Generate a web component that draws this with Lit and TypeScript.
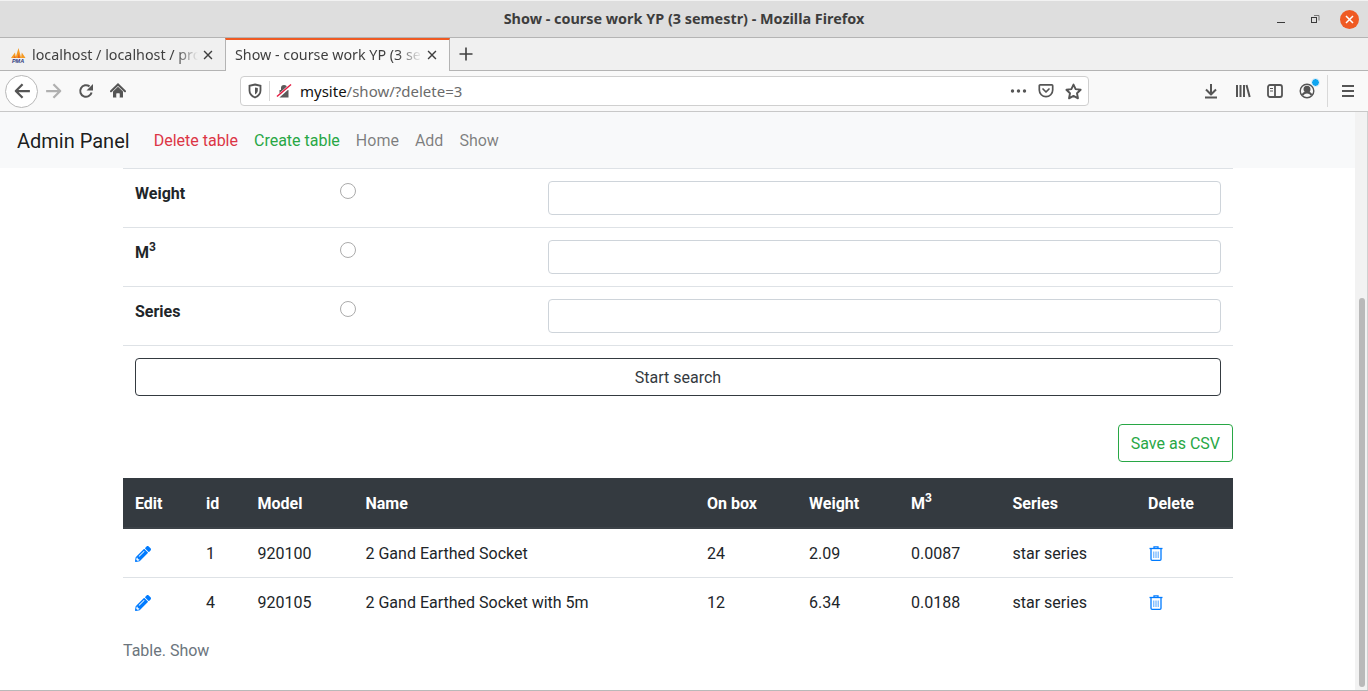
import { LitElement, css, html, svg } from "lit";
import { customElement } from "lit/decorators.js";

const rows = [
  { id: 1, model: "920100", name: "2 Gand Earthed Socket", box: 24, weight: "2.09", m3: "0.0087", series: "star series" },
  { id: 4, model: "920105", name: "2 Gand Earthed Socket with 5m", box: 12, weight: "6.34", m3: "0.0188", series: "star series" },
];

const pencil = svg`<path fill="#007bff" d="M497.9 142.1l-46.1 46.1c-4.7 4.7-12.3 4.7-17 0l-111-111c-4.7-4.7-4.7-12.3 0-17l46.1-46.1c18.7-18.7 49.1-18.7 67.9 0l60.1 60.1c18.8 18.7 18.8 49.1 0 67.9zM284.2 99.8L21.6 362.4.4 483.9c-2.9 16.4 11.4 30.6 27.8 27.8l121.5-21.3 262.6-262.6c4.7-4.7 4.7-12.3 0-17l-111-111c-4.8-4.7-12.4-4.7-17.1 0zM124.1 339.9c-5.5-5.5-5.5-14.3 0-19.8l154-154c5.5-5.5 14.3-5.5 19.8 0s5.5 14.3 0 19.8l-154 154c-5.5 5.500-14.3 5.500-19.8 0zM88 424h48v36.3l-64.5 11.3-31.1-31.1L51.7 376H88v48z"/>`;

const trash = svg`<g fill="none" stroke="#007bff">
  <path d="M.5 2.500h13" stroke-width="1.300"/>
  <path d="M5 2V.9h4V2" stroke-width="1.300"/>
  <path d="M2 3v10.200c0 .7.4 1.100 1.100 1.100h7.800c.7 0 1.100-.4 1.100-1.100V3" stroke-width="1.300"/>
  <path d="M4.800 5.500v6.500M7 5.500v6.500M9.200 5.500v6.500" stroke-width="1" opacity=".7"/>
</g>`;

@customElement("app-root")
export class AppRoot extends LitElement {
  static styles = css`
    :host {
      display: flex;
      flex-direction: column;
      width: 1368px;
      height: 691px;
      overflow: hidden;
      background: #fff;
      font-family: Roboto, "Liberation Sans", sans-serif;
      font-size: 16px;
      line-height: 24px;
      color: #212529;
    }
    svg { display: block; }

    /* firefox window */
    .titlebar {
      flex: none;
      height: 38px;
      box-sizing: border-box;
      border-top: 1px solid #f2f2f2;
      border-bottom: 1px solid #b4b4b4;
      background: #dedede;
      display: flex;
      align-items: center;
      justify-content: center;
      position: relative;
      font: 700 14.4px/20px "Noto Sans", sans-serif;
      color: #3d3d3d;
    }
    .winbtns {
      position: absolute;
      right: 0;
      top: 0;
      height: 36px;
      display: flex;
      align-items: center;
    }
    .winbtn { width: 34px; display: flex; justify-content: center; }
    .winbtn.close { width: 36px; }
    .closeball {
      width: 19px;
      height: 19px;
      border-radius: 50%;
      background: #ef5a23;
      margin-right: 2px;
      display: flex;
      align-items: center;
      justify-content: center;
    }

    .tabs {
      flex: none;
      height: 33px;
      box-sizing: border-box;
      display: flex;
      background: #f0f0f0;
      border-bottom: 1px solid #b4b4b4;
      font: 14.3px/20px "Noto Sans", sans-serif;
      color: #3f3f3f;
    }
    .tab {
      width: 225px;
      box-sizing: border-box;
      display: flex;
      align-items: center;
      position: relative;
    }
    .tab.first { padding: 2px 0 0 10px; }
    .tab.active {
      height: 33px;
      padding: 0 0 2px 9px;
      background: #f9f9f9;
      border-left: 1px solid #b4b4b4;
      border-right: 1px solid #b4b4b4;
      border-top: 2px solid #ef5a23;
    }
    .tabtext {
      flex: 1;
      min-width: 0;
      white-space: nowrap;
      overflow: hidden;
      -webkit-mask-image: linear-gradient(to right, #000 87%, transparent 100%);
      mask-image: linear-gradient(to right, #000 87%, transparent 100%);
    }
    .favicon { margin-right: 6px; flex: none; }
    .tabclose { flex: none; margin: 0 10px 0 3px; }
    .newtab { width: 32px; display: flex; align-items: center; justify-content: center; }

    .toolbar {
      flex: none;
      height: 41px;
      box-sizing: border-box;
      display: flex;
      align-items: center;
      background: #f9f9f9;
      border-bottom: 1px solid #c8c8c8;
      padding-left: 5px;
    }
    .tool {
      flex: none;
      width: 32px;
      height: 32px;
      display: flex;
      align-items: center;
      justify-content: center;
      position: relative;
    }
    .tool.back {
      width: 33px;
      height: 33px;
      box-sizing: border-box;
      border: 1px solid #b8b8b8;
      border-radius: 50%;
      background: #fff;
    }
    .urlbar {
      flex: none;
      width: 849px;
      height: 30px;
      margin: 0 106px;
      box-sizing: border-box;
      background: #fff;
      border: 1px solid #cfcfcf;
      border-radius: 4px;
      display: flex;
      align-items: center;
      padding: 0 6px;
      font: 15px/20px "Noto Sans", sans-serif;
      color: #6b6b6b;
    }
    .urlbar b { font-weight: 400; color: #111; }
    .urlsep { width: 1px; height: 20px; background: #d8d8d8; margin: 0 6px; }
    .urlspacer { flex: 1; }
    .urlicons { display: flex; align-items: center; gap: 11px; }
    .urllock { margin-right: 8px; }
    .toolsep { width: 1px; height: 32px; background: #d9d9d9; margin: 0 4px; flex: none; }
    .dot {
      position: absolute;
      right: 3px;
      top: 3px;
      width: 7px;
      height: 7px;
      border-radius: 50%;
      background: #0fa5f0;
      border: 1px solid #f9f9f9;
    }

    /* page */
    .viewport { flex: 1; min-height: 0; display: flex; border-bottom: 1px solid #b9b9b9; }
    .page { flex: 1; min-width: 0; }
    .scrollbar {
      flex: none;
      width: 13px;
      background: #f2f2f2;
      border-right: 1px solid #d0d0d0;
      box-sizing: border-box;
      display: flex;
      justify-content: center;
      padding: 186px 0 3px 1px;
    }
    .thumb { width: 6px; background: #b9b9b9; border-radius: 3px; }

    .navbar {
      height: 56px;
      box-sizing: border-box;
      background: #f8f9fa;
      display: flex;
      align-items: center;
      padding: 1px 0 0 17px;
    }
    .brand { font-size: 20px; line-height: 30px; color: rgba(0, 0, 0, 0.9); margin-right: 16px; }
    .navlink { padding: 0 8px; color: rgba(0, 0, 0, 0.5); }
    .navlink.red { color: #dc3545; }
    .navlink.green { color: #28a745; }

    .container { width: 1110px; margin-left: 123px; }
    table { border-collapse: separate; border-spacing: 0; table-layout: fixed; width: 100%; }
    sup { font-size: 12px; line-height: 0; position: relative; top: -7px; vertical-align: baseline; }

    .search td { padding: 12px; vertical-align: top; border-top: 1px solid #dee2e6; }
    .search .label { width: 205px; box-sizing: border-box; font-weight: 700; padding: 13px 12px 11px; }
    .search .pick { width: 208px; box-sizing: border-box; }
    .radio {
      width: 16px;
      height: 16px;
      box-sizing: border-box;
      border: 1px solid #ababab;
      border-radius: 50%;
      background: #fff;
      margin-top: 2px;
    }
    .field {
      height: 34px;
      box-sizing: border-box;
      border: 1px solid #ced4da;
      border-radius: 4px;
      background: #fff;
    }
    .searchbtn {
      display: block;
      box-sizing: border-box;
      width: 1086px;
      height: 38px;
      margin: 0 12px;
      padding: 2px 0 0;
      border: 1px solid #343a40;
      border-radius: 4px;
      background: #fff;
      font: inherit;
      color: #343a40;
    }
    .search-foot { border-top: 1px solid #dee2e6; padding-top: 12px; }
    .csvrow { display: flex; justify-content: flex-end; margin: 28px 0 16px; }
    .csv {
      box-sizing: border-box;
      height: 38px;
      padding: 2px 12px 0;
      border: 1px solid #28a745;
      border-radius: 4px;
      background: #fff;
      font: inherit;
      color: #28a745;
    }

    .data th {
      box-sizing: border-box;
      padding: 14px 12px 11px;
      text-align: left;
      font-weight: 700;
      color: #fff;
      background: #343a40;
      border-bottom: 2px solid #3c4248;
    }
    .data td { padding: 13px 12px 11px; border-bottom: 1px solid #dee2e6; }
    .data tr:last-child td { border-bottom: none; }
    .c-edit { width: 71px; }
    .c-id { width: 51.5px; }
    .c-model { width: 108px; }
    .c-name { width: 341.5px; }
    .c-box { width: 102px; }
    .c-weight { width: 102px; }
    .c-m3 { width: 101.5px; }
    .c-series { width: 135.5px; }
    .rowicon { margin-top: -1px; }
    .rowicon.bin { margin-left: 1px; }
    .caption { color: #6c757d; padding-top: 13px; }
  `;

  private stroke(d: string, size = 16, color = "#555", width = 2) {
    return html`<svg width=${size} height=${size} viewBox="0 0 16 16" fill="none" stroke=${color}
      stroke-width=${width} stroke-linejoin="round"><path d=${d}></path></svg>`;
  }

  private renderChrome() {
    return html`
      <div class="titlebar">
        Show - course work YP (3 semestr) - Mozilla Firefox
        <div class="winbtns">
          <div class="winbtn">
            <svg width="10" height="10" viewBox="0 0 10 10"><path d="M1 8.500h8" stroke="#3a3a3a" stroke-width="1"/></svg>
          </div>
          <div class="winbtn">
            <svg width="10" height="10" viewBox="0 0 10 10" fill="none" stroke="#3a3a3a">
              <rect x="1.500" y="3.500" width="5" height="5"/><path d="M4 1.500h5v5" stroke="#777"/>
            </svg>
          </div>
          <div class="winbtn close">
            <div class="closeball">
              <svg width="9" height="9" viewBox="0 0 9 9"><path d="M1 1l7 7M8 1l-7 7" stroke="#fff" stroke-width="1.500"/></svg>
            </div>
          </div>
        </div>
      </div>
      <div class="tabs">
        <div class="tab first">
          <svg class="favicon" width="16" height="16" viewBox="0 0 16 16">
            <path d="M1 11L5 5.500l.8 5.500zM5.500 11L8.500 1l2.700 10zM11 11l.8-5.500 3.700 5.500z" fill="#f59a23"/>
            <path d="M3.500 11l1.700-2.500.5 2.500zM7.500 11l1.300-4.500 1.200 4.500z" fill="#e8641a"/>
            <text x="8" y="15.600" text-anchor="middle" font-family="Liberation Sans" font-size="5.500"
              font-weight="700" font-style="italic" fill="#2f3a7d">PMA</text>
          </svg>
          <span class="tabtext">localhost / localhost / prod_db</span>
          <span class="tabclose">${this.stroke("M3.500 3.500l9 9M12.500 3.500l-9 9", 14, "#3f3f3f", 1.600)}</span>
        </div>
        <div class="tab active">
          <span class="tabtext">Show - course work YP (3 semestr)</span>
          <span class="tabclose">${this.stroke("M3.500 3.500l9 9M12.500 3.500l-9 9", 14, "#3f3f3f", 1.600)}</span>
        </div>
        <div class="newtab">${this.stroke("M8 1.500v13M1.500 8h13", 16, "#3f3f3f", 1.600)}</div>
      </div>
      <div class="toolbar">
        <div class="tool back">${this.stroke("M15 8H2.500M8.500 2L2.500 8l6 6", 18)}</div>
        <div class="tool">${this.stroke("M1 8h12.500M7.500 2l6 6-6 6", 18, "#b0b0b0")}</div>
        <div class="tool">
          <svg width="16" height="16" viewBox="0 0 16 16">
            <path d="M13.600 9.500A5.800 5.800 0 1 1 11.500 3.400" fill="none" stroke="#555" stroke-width="2"/>
            <path d="M15 1v6.500H8.500z" fill="#555"/>
          </svg>
        </div>
        <div class="tool">
          <svg width="16" height="16" viewBox="0 0 16 16">
            <path d="M1 8.300L8 1.500l7 6.800" fill="none" stroke="#555" stroke-width="2" stroke-linecap="round"/>
            <path d="M3 8.500L8 3.800l5 4.700v6H9.500v-4h-3v4H3z" fill="#555"/>
            <path d="M6.500 10.500h3v4h-3z" fill="#f9f9f9"/>
          </svg>
        </div>
        <div class="urlbar">
          <svg width="16" height="16" viewBox="0 0 16 16" fill="none" stroke="#555" stroke-width="1.800">
            <path d="M8 1.500l5.500 1.300v4.700c0 3.400-2.400 5.700-5.500 7-3.100-1.300-5.500-3.600-5.500-7V2.800z"/>
            <path d="M8 4.500v7c1.600-.8 2.800-2.200 2.800-4V5.100z" fill="#555" stroke="none"/>
          </svg>
          <span class="urlsep"></span>
          <svg class="urllock" width="16" height="16" viewBox="0 0 16 16">
            <path d="M5 7V5a3 3 0 0 1 6 0v2h1.500v7.500h-9V7z" fill="#5a5a5a"/>
            <path d="M1 14.500L15 2" stroke="#fff" stroke-width="3.200"/>
            <path d="M1 13.500L15 1.500" stroke="#e4193f" stroke-width="1.500"/>
          </svg>
          <span><b>mysite</b>/show/?delete=3</span>
          <span class="urlspacer"></span>
          <span class="urlicons">
            <svg width="17" height="16" viewBox="0 0 17 16"><g fill="#555"><circle cx="2.500" cy="8" r="1.700"/><circle cx="8.500" cy="8" r="1.700"/><circle cx="14.500" cy="8" r="1.700"/></g></svg>
            <svg width="16" height="16" viewBox="0 0 16 16" fill="none" stroke="#555" stroke-width="1.700" stroke-linecap="round" stroke-linejoin="round">
              <path d="M2.200 1.800h11.600c.5 0 .9.400.9.900v4.300c0 3.700-3 6.700-6.700 6.700S1.300 10.700 1.300 7V2.700c0-.5.400-.9.900-.9z"/><path d="M5 6l3 3 3-3"/>
            </svg>
            ${this.stroke("M8 1.500l2 4.300 4.700.6-3.400 3.300.9 4.700L8 12.100l-4.200 2.300.9-4.700L1.300 6.400 6 5.800z", 17, "#555", 1.800)}
          </span>
        </div>
        <div class="tool">${this.stroke("M8 1v10M3 6.500L8 11.500l5-5M2 14.500h12", 16)}</div>
        <div class="tool">${this.stroke("M2 2v12M5.500 2v12M9 2v12M11.500 2l3.200 12", 16)}</div>
        <div class="tool">
          <svg width="16" height="16" viewBox="0 0 16 16" fill="none" stroke="#555" stroke-width="1.800">
            <rect x="1" y="2" width="14" height="12" rx="2"/><path d="M8 2v12"/>
            <path d="M3 5.500h3M3 8h3" stroke-width="1.200"/>
          </svg>
        </div>
        <div class="tool">
          <svg width="16" height="16" viewBox="0 0 16 16" fill="none" stroke="#555" stroke-width="1.400">
            <circle cx="8" cy="8" r="6.800"/><circle cx="8" cy="6.200" r="2.800" fill="#555"/>
            <path d="M3.500 12c1-2 2.500-2.500 4.500-2.500s3.500.5 4.500 2.500" stroke-width="2"/>
          </svg>
          <span class="dot"></span>
        </div>
        <div class="toolsep"></div>
        <div class="tool">${this.stroke("M2 3h12M2 8h12M2 13h12", 16)}</div>
      </div>
    `;
  }

  private renderSearchRow(label: unknown) {
    return html`<tr>
      <td class="label">${label}</td>
      <td class="pick"><div class="radio"></div></td>
      <td><div class="field"></div></td>
    </tr>`;
  }

  render() {
    const m3 = html`M<sup>3</sup>`;
    return html`
      ${this.renderChrome()}
      <div class="viewport">
        <div class="page">
          <nav class="navbar">
            <span class="brand">Admin Panel</span>
            <span class="navlink red">Delete table</span>
            <span class="navlink green">Create table</span>
            <span class="navlink">Home</span>
            <span class="navlink">Add</span>
            <span class="navlink">Show</span>
          </nav>
          <div class="container">
            <table class="search">
              ${this.renderSearchRow("Weight")}
              ${this.renderSearchRow(m3)}
              ${this.renderSearchRow("Series")}
            </table>
            <div class="search-foot"><button class="searchbtn">Start search</button></div>
            <div class="csvrow"><button class="csv">Save as CSV</button></div>
            <table class="data">
              <thead>
                <tr>
                  <th class="c-edit">Edit</th>
                  <th class="c-id">id</th>
                  <th class="c-model">Model</th>
                  <th class="c-name">Name</th>
                  <th class="c-box">On box</th>
                  <th class="c-weight">Weight</th>
                  <th class="c-m3">${m3}</th>
                  <th class="c-series">Series</th>
                  <th>Delete</th>
                </tr>
              </thead>
              <tbody>
                ${rows.map(
                  (r) => html`<tr>
                    <td><svg class="rowicon" width="16" height="16" viewBox="0 0 512 512">${pencil}</svg></td>
                    <td>${r.id}</td>
                    <td>${r.model}</td>
                    <td>${r.name}</td>
                    <td>${r.box}</td>
                    <td>${r.weight}</td>
                    <td>${r.m3}</td>
                    <td>${r.series}</td>
                    <td><svg class="rowicon bin" width="14" height="16" viewBox="0 0 14 16">${trash}</svg></td>
                  </tr>`
                )}
              </tbody>
            </table>
            <div class="caption">Table. Show</div>
          </div>
        </div>
        <div class="scrollbar"><div class="thumb"></div></div>
      </div>
    `;
  }
}
